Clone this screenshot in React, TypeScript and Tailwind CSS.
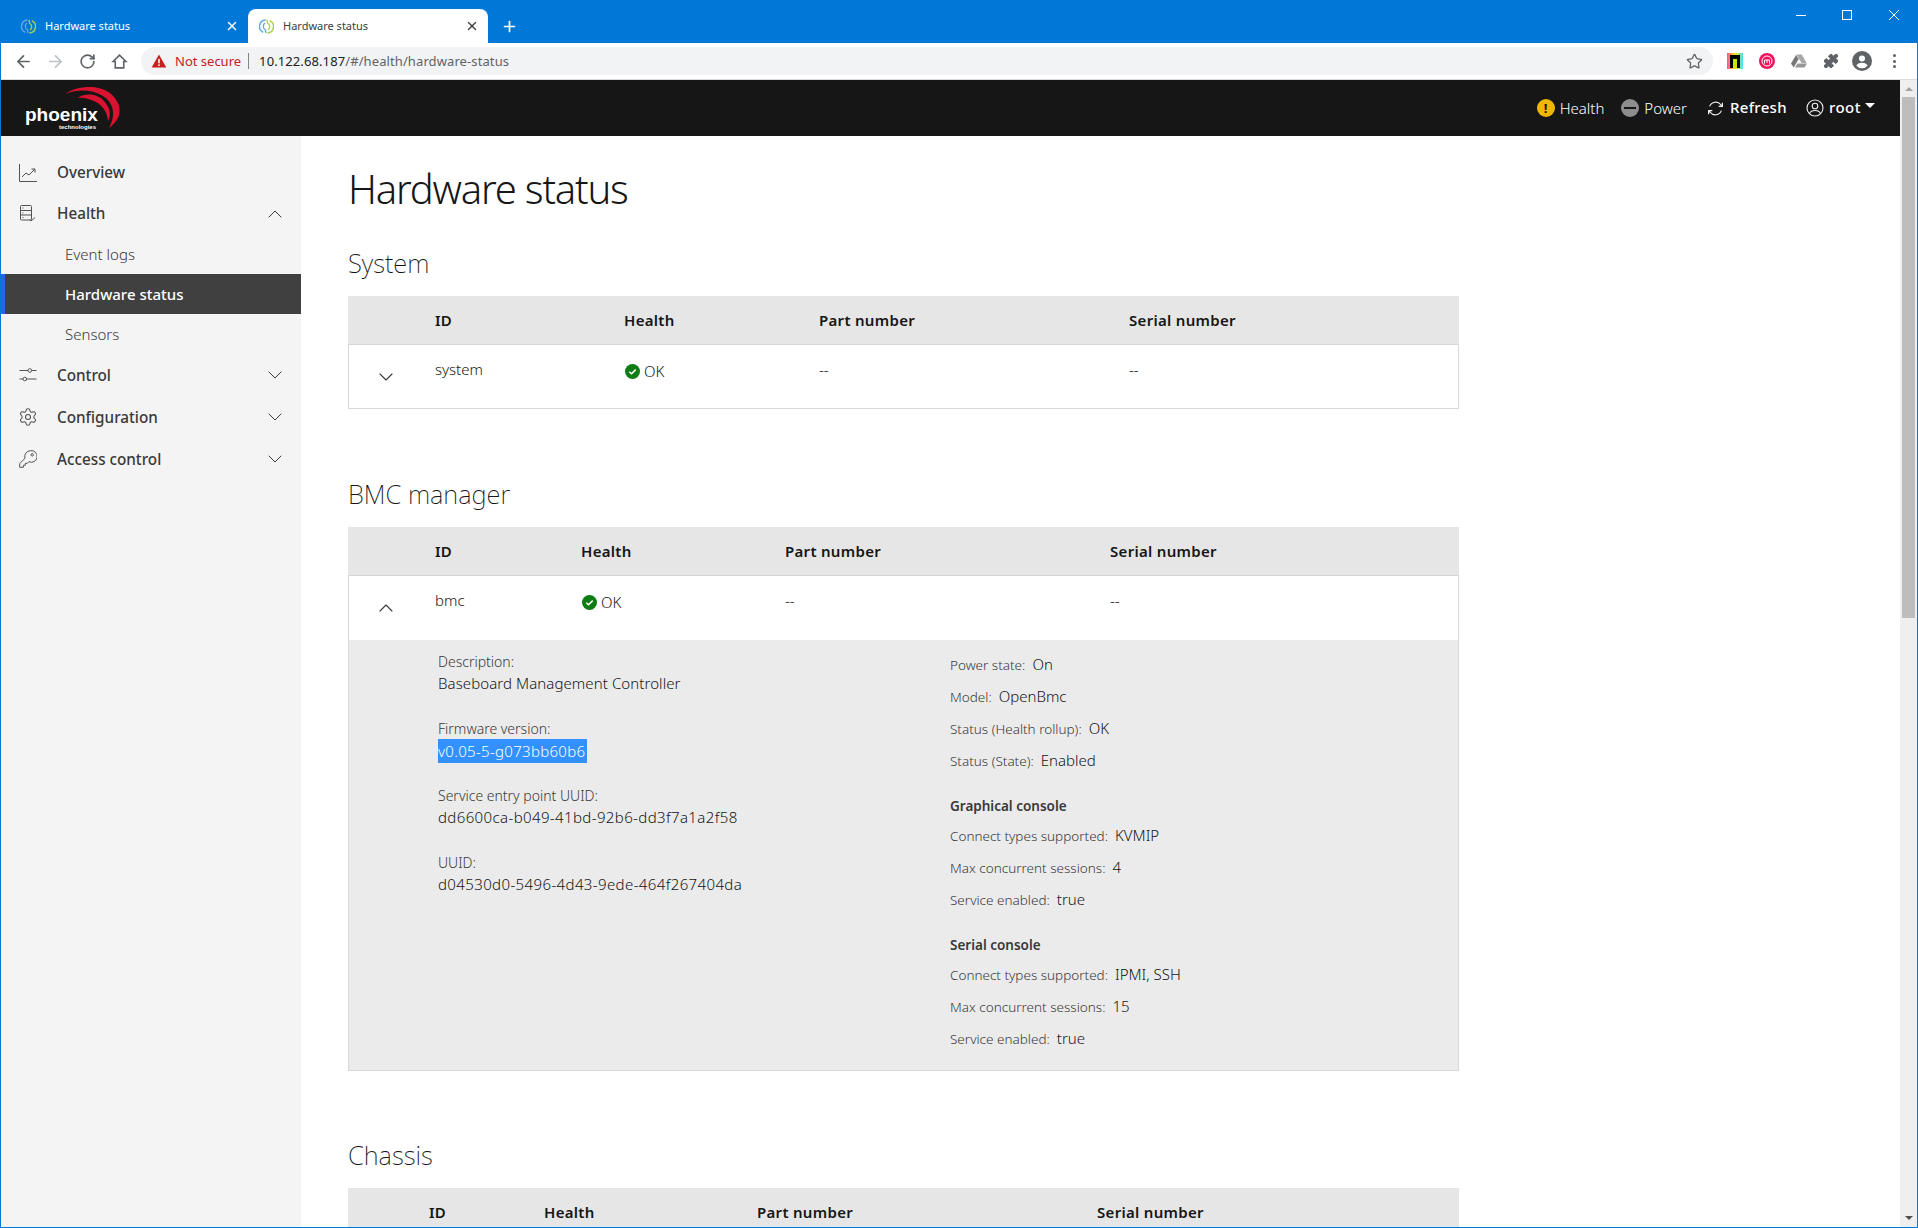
import React from "react";
import { ChevronDown, ChevronUp, Plus, X, ArrowLeft, ArrowRight, RotateCw, Star, Puzzle, Settings } from "lucide-react";

function Favicon() {
  return (
    <svg width="15" height="15" viewBox="0 0 16 16" fill="none" className="shrink-0">
      <path d="M7 1A7 7 0 0 0 4.500 14.300" stroke="#62a9dc" strokeWidth="1.600" />
      <path d="M6.500 4.200C3.800 6 4 10 6.800 11.500L7.500 15" stroke="#62a9dc" strokeWidth="1.400" />
      <path d="M9 15A7 7 0 0 0 11.500 1.700" stroke="#a8d048" strokeWidth="1.600" />
      <path d="M9.500 11.800C12.200 10 12 6 9.200 4.500L8.500 1" stroke="#a8d048" strokeWidth="1.400" />
    </svg>
  );
}

function Tab({ active }: { active?: boolean }) {
  return (
    <div className={active ? "w-[240px] h-[34px] bg-white rounded-t-lg flex items-center pl-[11px] pr-[9px] text-[#3c4043]" : "w-[238px] h-[34px] flex items-center pl-[11px] pr-[9px] text-white"}>
      <Favicon />
      <span className="ml-[9px] text-[11px] flex-1">Hardware status</span>
      <X size={14} strokeWidth={2.400} />
    </div>
  );
}

function WindowControls() {
  return (
    <div className="absolute right-0 top-0 h-[30px] flex items-center text-white">
      <div className="w-[46px] flex justify-center">
        <svg width="10" height="10" viewBox="0 0 10 10" fill="none" stroke="currentColor"><path d="M0 5.500h10" /></svg>
      </div>
      <div className="w-[46px] flex justify-center">
        <svg width="10" height="10" viewBox="0 0 10 10" fill="none" stroke="currentColor"><rect x=".5" y=".5" width="9" height="9" /></svg>
      </div>
      <div className="w-[47px] flex justify-center">
        <svg width="10" height="10" viewBox="0 0 10 10" fill="none" stroke="currentColor"><path d="M0 0l10 10M10 0 0 10" /></svg>
      </div>
    </div>
  );
}

function NavButton({ children }: { children: React.ReactNode }) {
  return <div className="w-[32px] flex justify-center shrink-0">{children}</div>;
}

function Chrome() {
  return (
    <div className="shrink-0">
      <div className="h-[43px] bg-[#0078d7] flex items-end pl-[9px] relative">
        <Tab />
        <Tab active />
        <Plus size={17} strokeWidth={2.400} className="text-white ml-[13px] mb-[8px]" />
        <WindowControls />
      </div>
      <div className="h-[37px] bg-white border-b border-[#dadce0] flex items-center pl-[6px] text-[#5f6368]">
        <NavButton><ArrowLeft size={19} strokeWidth={2.200} /></NavButton>
        <NavButton><ArrowRight size={19} strokeWidth={2.200} className="text-[#bdc1c6]" /></NavButton>
        <NavButton><RotateCw size={17} strokeWidth={2.400} /></NavButton>
        <NavButton>
          <svg width="17" height="17" viewBox="0 0 16 16" fill="none"><path d="M8 2 2 8h2v6h8V8h2z" stroke="#5f6368" strokeWidth="1.500" /></svg>
        </NavButton>
        <div className="ml-[6px] w-[1572px] h-[28px] bg-[#f1f3f4] rounded-full flex items-center pl-[10px] pr-[10px] text-[13px] shrink-0">
          <svg width="16" height="14" viewBox="0 0 14 13"><path d="M7 0.500 13.800 12.500H.2z" fill="#c5221f" /><rect x="6.300" y="4.500" width="1.400" height="4.200" fill="#fff" /><rect x="6.300" y="9.600" width="1.400" height="1.500" fill="#fff" /></svg>
          <span className="ml-[8px] text-[#c5221f] mt-px">Not secure</span>
          <span className="ml-[7px] w-px h-[16px] bg-[#80868b]" />
          <span className="ml-[10px] text-[#202124] tracking-[0.1px] mt-px">10.122.68.187</span>
          <span className="text-[#5f6368] tracking-[0.1px] mt-px">/#/health/hardware-status</span>
          <Star size={17} strokeWidth={1.800} className="ml-auto text-[#5f6368]" />
        </div>
        <div className="ml-[14px] w-[16px] h-[16px] bg-[linear-gradient(90deg,#ff4fa0,#ffe600_50%,#3fe0ff)] flex items-center justify-center shrink-0">
          <div className="w-[10px] h-[13px] bg-black flex items-end justify-center"><div className="w-[4px] h-[9px] bg-[#c8e600]" /></div>
        </div>
        <svg width="16" height="16" viewBox="0 0 16 16" className="ml-[16px] shrink-0"><circle cx="8" cy="8" r="8" fill="#f0145a" /><circle cx="8" cy="8" r="5" fill="none" stroke="#fff" strokeWidth="1" /><path d="M5.500 10.500V7h5v3.500M8 7v3" fill="none" stroke="#fff" strokeWidth="1" /></svg>
        <svg width="16" height="14" viewBox="0 0 16 14" className="ml-[16px] shrink-0"><path d="M5.300.5h5.400l5 8.500H10.500z" fill="#a8a8a8" /><path d="M5 1 0 9.500 2.700 13.500 7.700 5z" fill="#777" /><path d="M4 13.500h9.500L16 9.500H6.500z" fill="#969696" /></svg>
        <Puzzle size={16} fill="#5f6368" strokeWidth={1.500} className="ml-[16px] shrink-0" />
        <svg width="20" height="20" viewBox="0 0 20 20" className="ml-[13px] shrink-0"><circle cx="10" cy="10" r="10" fill="#5f6368" /><circle cx="10" cy="7.600" r="3" fill="#fff" /><path d="M4.300 14.500c1.400-2 3.600-2.700 5.700-2.700s4.300.7 5.700 2.700A7.200 7.200 0 0 1 10 17.300a7.200 7.200 0 0 1-5.700-2.800z" fill="#fff" /></svg>
        <div className="ml-[21px] flex flex-col gap-[2.500px] shrink-0">
          <div className="w-[3px] h-[3px] rounded-full bg-[#5f6368]" />
          <div className="w-[3px] h-[3px] rounded-full bg-[#5f6368]" />
          <div className="w-[3px] h-[3px] rounded-full bg-[#5f6368]" />
        </div>
      </div>
    </div>
  );
}

function Logo() {
  return (
    <div className="relative w-[100px] h-[56px] ml-[24px]">
      <svg width="100" height="56" viewBox="0 0 100 56" className="absolute left-0 top-0">
        <path d="M40 14C52 6 72 4 85 13 98 24 98 38 84 48 91 35 89 23 78 16 66 9 52 9 40 14z" fill="#d9122f" />
        <path d="M52 18C62 12 73 14 79 21 86 29 86 35 83 41 82 32 78 26 71 22 65 19 58 17 52 18z" fill="#d9122f" />
      </svg>
      <span className="absolute left-0 top-[25px] text-white font-bold text-[19px] leading-[20px] font-['Liberation_Sans',sans-serif]">phoenix</span>
      <span className="absolute left-[34px] top-[43px] text-white font-bold text-[6px] leading-[8px] font-['Liberation_Sans',sans-serif]">technologies</span>
    </div>
  );
}

function TopBar() {
  return (
    <div className="h-[56px] bg-[#161616] flex items-center shrink-0 text-white text-[15px]">
      <Logo />
      <div className="ml-auto flex items-center mr-[25px]">
        <div className="w-[18px] h-[18px] rounded-full bg-[#efb700] text-[#161616] flex items-center justify-center text-[13px] font-bold leading-none">!</div>
        <span className="ml-[5px] font-light">Health</span>
        <div className="ml-[17px] w-[18px] h-[18px] rounded-full bg-[#8d8d8d] flex items-center justify-center"><div className="w-[12px] h-[2px] bg-[#161616]" /></div>
        <span className="ml-[5px] font-light">Power</span>
        <svg width="17" height="17" viewBox="0 0 16 16" fill="none" stroke="#f0f0f0" strokeWidth="1.100" className="ml-[20px]">
          <path d="M2.500 6A6 6 0 0 1 13 4.500L14.500 6M14.500 2.500V6H11" />
          <path d="M13.500 10A6 6 0 0 1 3 11.500L1.500 10M1.500 13.500V10H5" />
        </svg>
        <span className="ml-[6px] font-medium tracking-[0.300px] -mt-[2px]">Refresh</span>
        <svg width="18" height="18" viewBox="0 0 18 18" fill="none" stroke="#f0f0f0" strokeWidth="1.100" className="ml-[19px]">
          <circle cx="9" cy="9" r="8" /><circle cx="9" cy="7" r="2.800" /><path d="M3.500 14.500c1-2.500 3-3 5.500-3s4.500.5 5.500 3" />
        </svg>
        <span className="ml-[5px] font-medium tracking-[0.500px] -mt-[2px]">root</span>
        <span className="ml-[4px] mb-[5px] w-0 h-0 border-x-[5px] border-x-transparent border-t-[5px] border-t-white" />
      </div>
    </div>
  );
}

function OverviewIcon() {
  return (
    <svg width="18" height="18" viewBox="0 0 18 18" fill="none" stroke="#525252" strokeWidth="1">
      <path d="M.5 0v17.500H18" />
      <path d="M3 13l4-4 3 2 6-6M12.500 5H16v3.500" />
    </svg>
  );
}

function HealthIcon() {
  return (
    <svg width="16" height="17" viewBox="0 0 16 17" fill="none" stroke="#525252" strokeWidth="1">
      <rect x=".5" y=".5" width="11" height="14.500" rx="1" />
      <path d="M.5 5.500h11M.5 10h11" />
      <path d="M2.500 3h1M2.500 8h1M2.500 12.500h1" />
      <path d="M9.500 14.500l1.500 1.500 4-3.500" />
    </svg>
  );
}

function ControlIcon() {
  return (
    <svg width="18" height="18" viewBox="0 0 18 18" fill="none" stroke="#525252" strokeWidth="1">
      <path d="M0.500 4.500h8.500M12.500 4.500h5M0.500 13h3.500M7.500 13h10" />
      <circle cx="10.800" cy="4.500" r="1.800" /><circle cx="5.800" cy="13" r="1.800" />
    </svg>
  );
}

function KeyIcon() {
  return (
    <svg width="18" height="18" viewBox="0 0 18 18" fill="none" stroke="#525252" strokeWidth="1">
      <path d="M11.500 .7a5.800 5.800 0 0 0-5.500 7.600L.7 13.600v3.700h3.600v-2h2v-2h2l1.600-1.600A5.800 5.800 0 1 0 11.500 .7z" />
      <circle cx="13.200" cy="4.800" r="1.200" />
    </svg>
  );
}

function NavTop({ icon, label, chevron, className }: { icon: React.ReactNode; label: string; chevron?: "up" | "down"; className: string }) {
  return (
    <div className={`${className} flex items-center pl-[17px] pr-[14px] text-[#393939] text-[15.250px] font-medium`}>
      <span className="w-[20px] flex justify-center">{icon}</span>
      <span className="ml-[19px]">{label}</span>
      {chevron === "up" && <ChevronUp size={24} strokeWidth={1} className="ml-auto text-[#393939]" />}
      {chevron === "down" && <ChevronDown size={24} strokeWidth={1} className="ml-auto text-[#393939]" />}
    </div>
  );
}

function Sidebar() {
  return (
    <aside className="w-[300px] shrink-0 bg-[#f4f4f4] pt-[16px]">
      <NavTop className="h-[41px]" icon={<OverviewIcon />} label="Overview" />
      <NavTop className="h-[41px]" icon={<HealthIcon />} label="Health" chevron="up" />
      <div className="h-[40px] flex items-center pl-[64px] text-[15px] font-light text-[#393939]">Event logs</div>
      <div className="h-[40px] flex items-center pl-[60px] text-[15px] font-medium text-white bg-[#404040] border-l-[4px] border-[#2d60e5]">Hardware status</div>
      <div className="h-[40px] flex items-center pl-[64px] text-[15px] font-light text-[#393939]">Sensors</div>
      <NavTop className="h-[42px]" icon={<ControlIcon />} label="Control" chevron="down" />
      <NavTop className="h-[42px]" icon={<Settings size={20} strokeWidth={1.300} className="text-[#525252]" />} label="Configuration" chevron="down" />
      <NavTop className="h-[42px]" icon={<KeyIcon />} label="Access control" chevron="down" />
    </aside>
  );
}

function OkBadge() {
  return (
    <span className="flex items-center self-start mt-[2px] ml-px">
      <svg width="15" height="15" viewBox="0 0 15 15"><circle cx="7.500" cy="7.500" r="7.500" fill="#0e7d14" /><path d="M4.300 7.700 6.500 9.800 10.700 5.600" fill="none" stroke="#fff" strokeWidth="1.500" /></svg>
      <span className="ml-[4px] font-light text-[15px] text-[#161616]">OK</span>
    </span>
  );
}

function HeaderRow({ cols }: { cols: string }) {
  return (
    <div className={`grid ${cols} h-[49px] items-center bg-[#e6e6e6] border-b border-[#d6d6d6] text-[15px] font-semibold text-[#161616] tracking-[0.3px] pt-px`}>
      <span />
      <span>ID</span>
      <span>Health</span>
      <span>Part number</span>
      <span>Serial number</span>
    </div>
  );
}

function Row({ cols, id, open }: { cols: string; id: string; open?: boolean }) {
  return (
    <div className={`grid ${cols} h-[64px] bg-white shadow-[inset_1px_0_0_#d8d8d8,inset_-1px_0_0_#d8d8d8] ${open ? "" : "border-b border-[#d8d8d8]"} text-[15px] font-light text-[#161616] pt-[13px]`}>
      <span className="flex justify-start pl-[26px] pt-[7px] text-[#393939]">
        {open ? <ChevronUp size={24} strokeWidth={1.100} /> : <ChevronDown size={24} strokeWidth={1.100} />}
      </span>
      <span>{id}</span>
      <OkBadge />
      <span>--</span>
      <span>--</span>
    </div>
  );
}

function LeftItem({ label, value, selected, wide }: { label: string; value: string; selected?: boolean; wide?: boolean }) {
  return (
    <div className="h-[67px]">
      <div className="h-[22px] leading-[22px] text-[14px] font-light text-[#393939]">{label}</div>
      <div className={`h-[22px] -mt-px leading-[22px] text-[15px] font-light text-[#161616] ${wide ? "tracking-[0.380px]" : "tracking-[0.080px]"}`}>
        {selected ? <span className="block bg-[#3390ff] text-white h-[24px] leading-[24px] w-[149px] -mt-px tracking-[0.300px] whitespace-nowrap">{value}</span> : value}
      </div>
    </div>
  );
}

function RightItem({ label, value }: { label: string; value: string }) {
  return (
    <div className="h-[32px] leading-[32px] whitespace-nowrap">
      <span className="text-[13.500px] font-light text-[#393939]">{label}:</span>
      <span className="ml-[7px] text-[15px] font-light text-[#161616]">{value}</span>
    </div>
  );
}

function ConsoleTitle({ children }: { children: React.ReactNode }) {
  return <div className="mt-[15px] h-[28px] leading-[30px] text-[13.500px] font-semibold text-[#393939]">{children}</div>;
}

function Detail() {
  return (
    <div className="h-[431px] bg-[#ebebeb] border-x border-b border-[#d8d8d8] flex">
      <div className="w-[512px] pl-[89px] pt-[11px] shrink-0">
        <LeftItem label="Description:" value="Baseboard Management Controller" />
        <LeftItem label="Firmware version:" value="v0.05-5-g073bb60b6" selected />
        <LeftItem label="Service entry point UUID:" value="dd6600ca-b049-41bd-92b6-dd3f7a1a2f58" wide />
        <LeftItem label="UUID:" value="d04530d0-5496-4d43-9ede-464f267404da" wide />
      </div>
      <div className="pl-[89px] pt-[8px]">
        <RightItem label="Power state" value="On" />
        <RightItem label="Model" value="OpenBmc" />
        <RightItem label="Status (Health rollup)" value="OK" />
        <RightItem label="Status (State)" value="Enabled" />
        <ConsoleTitle>Graphical console</ConsoleTitle>
        <RightItem label="Connect types supported" value="KVMIP" />
        <RightItem label="Max concurrent sessions" value="4" />
        <RightItem label="Service enabled" value="true" />
        <ConsoleTitle>Serial console</ConsoleTitle>
        <RightItem label="Connect types supported" value="IPMI, SSH" />
        <RightItem label="Max concurrent sessions" value="15" />
        <RightItem label="Service enabled" value="true" />
      </div>
    </div>
  );
}

function SectionTitle({ children, className }: { children: React.ReactNode; className: string }) {
  return <h2 className={`${className} text-[25.500px] leading-[36px] font-extralight text-[#161616]`}>{children}</h2>;
}

function Scrollbar() {
  return (
    <div className="w-[17px] shrink-0 bg-[#efefef] flex flex-col items-center relative">
      <span className="mt-[7px] w-0 h-0 border-x-[4px] border-x-transparent border-b-[4px] border-b-[#a3a3a3]" />
      <div className="mt-[6px] w-[13px] h-[521px] bg-[#bdbdbd]" />
      <span className="absolute bottom-[7px] w-0 h-0 border-x-[4px] border-x-transparent border-t-[4px] border-t-[#505050]" />
    </div>
  );
}

const systemCols = "grid-cols-[87px_189px_195px_310px_1fr]";
const bmcCols = "grid-cols-[87px_146px_204px_325px_1fr]";
const chassisCols = "grid-cols-[81px_115px_213px_340px_1fr]";

export default function App() {
  return (
    <div className="h-screen w-full overflow-hidden flex flex-col border-x border-b border-[#0078d7] font-['Noto_Sans',sans-serif] bg-white">
      <Chrome />
      <div className="flex-1 flex min-h-0">
        <div className="flex-1 flex flex-col min-w-0">
          <TopBar />
          <div className="flex-1 flex min-h-0 overflow-hidden">
            <Sidebar />
            <main className="flex-1 pl-[47px] pt-[25px] overflow-hidden">
              <h1 className="text-[40px] leading-[56px] font-light text-[#161616] tracking-[-1.200px]">Hardware status</h1>
              <div className="w-[1111px]">
                <SectionTitle className="mt-[28px] mb-[15px]">System</SectionTitle>
                <HeaderRow cols={systemCols} />
                <Row cols={systemCols} id="system" />
                <SectionTitle className="mt-[67px] mb-[15px]">BMC manager</SectionTitle>
                <HeaderRow cols={bmcCols} />
                <Row cols={bmcCols} id="bmc" open />
                <Detail />
                <SectionTitle className="mt-[66px] mb-[15px]">Chassis</SectionTitle>
                <HeaderRow cols={chassisCols} />
              </div>
            </main>
          </div>
        </div>
        <Scrollbar />
      </div>
    </div>
  );
}
